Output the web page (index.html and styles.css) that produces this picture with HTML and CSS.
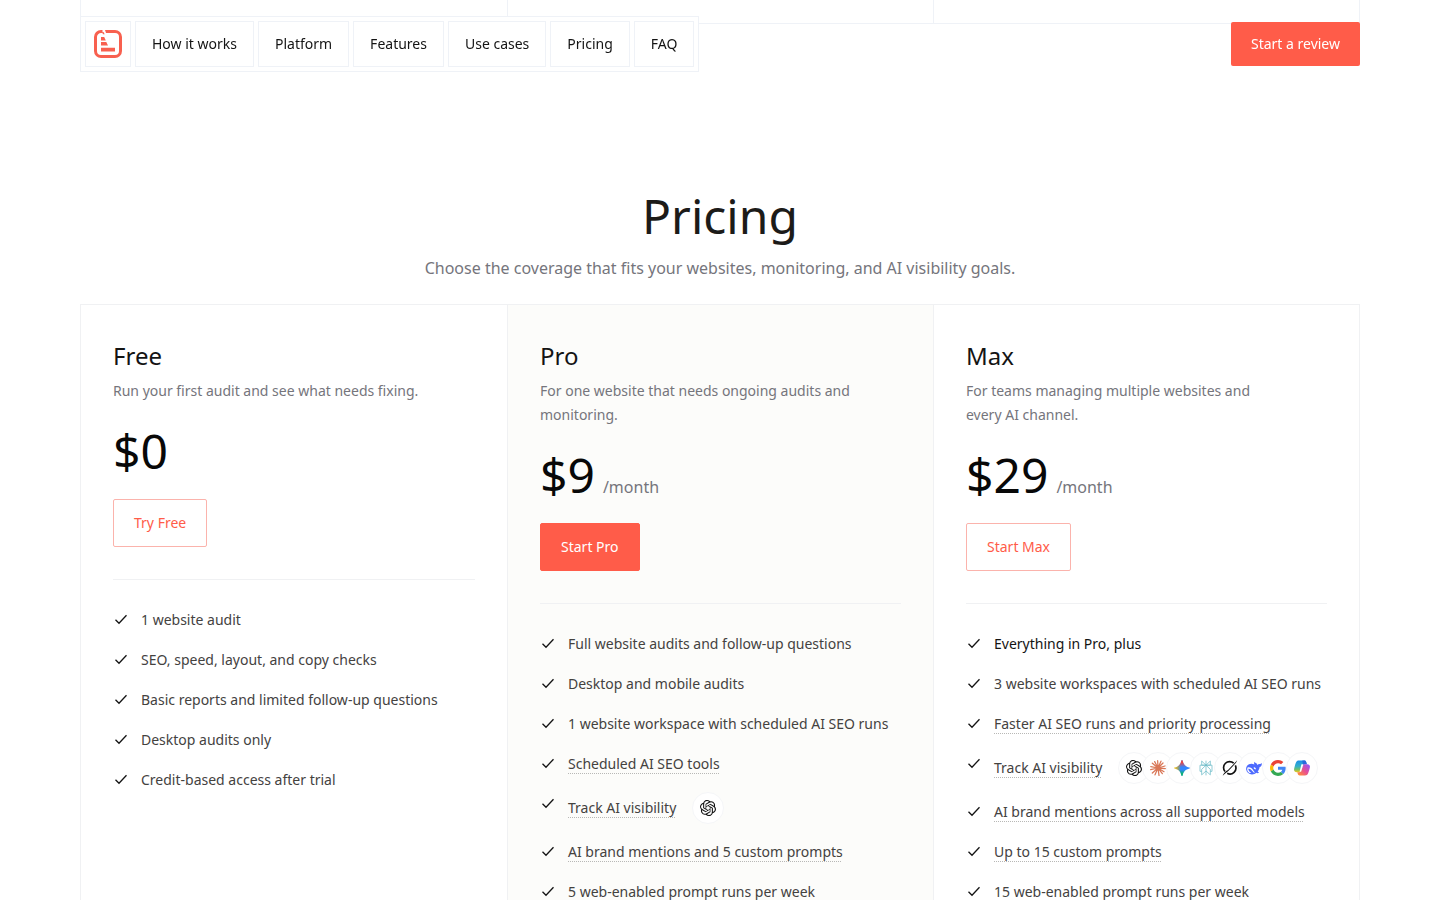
FILE: index.html
```html
<!DOCTYPE html>
<html lang="en">
<head>
<meta charset="utf-8">
<title>Pricing</title>
<meta name="viewport" content="width=device-width, initial-scale=1">
<link rel="stylesheet" href="styles.css">
</head>
<body>
<svg class="defs" aria-hidden="true">
  <defs>
    <linearGradient id="gem-a" x1="0" y1="0" x2="1" y2="0"><stop offset=".05" stop-color="#f6c21c"/><stop offset=".3" stop-color="#7f9a8a"/><stop offset=".42" stop-color="#3186ff"/></linearGradient>
    <linearGradient id="gem-b" x1="0" y1="0" x2="0" y2="1"><stop offset=".15" stop-color="#f0443c"/><stop offset=".45" stop-color="#f0443c" stop-opacity="0"/></linearGradient>
    <linearGradient id="gem-c" x1="0" y1="1" x2="0" y2="0"><stop offset=".12" stop-color="#08b962"/><stop offset=".4" stop-color="#08b962" stop-opacity="0"/></linearGradient>
    <linearGradient id="cop-a" x1="0" y1="0" x2="0" y2="1"><stop offset="0" stop-color="#1b8fe8"/><stop offset=".5" stop-color="#35b0c8"/><stop offset=".75" stop-color="#6cc070"/><stop offset="1" stop-color="#f5c518"/></linearGradient>
    <linearGradient id="cop-b" x1="1" y1="0" x2="0" y2="1"><stop offset=".1" stop-color="#9a55ee"/><stop offset=".5" stop-color="#e84f93"/><stop offset=".9" stop-color="#ff8a3c"/></linearGradient>
    <symbol id="check" viewBox="0 0 16 16"><path d="M2.500 7.700 6 11.200l7.500-8" fill="none" stroke="currentColor" stroke-width="1.300"/></symbol>
    <path id="spark" d="M12 0c.5 0 .7.4.8.8.8 3 1.700 5 3.500 6.900 1.900 1.800 3.900 2.700 6.900 3.500.4.1.8.3.8.8s-.4.7-.8.8c-3 .8-5 1.700-6.900 3.500-1.800 1.900-2.700 3.900-3.500 6.900-.1.4-.3.8-.8.8s-.7-.4-.8-.8c-.8-3-1.700-5-3.500-6.900-1.900-1.800-3.900-2.700-6.900-3.500C.4 12.700 0 12.500 0 12s.4-.7.8-.8c3-.8 5-1.700 6.900-3.500C9.500 5.800 10.400 3.800 11.200.8c.1-.4.3-.8.8-.8z"/>
    <symbol id="openai" viewBox="0 0 24 24"><path fill="#111" d="M22.2819 9.8211a5.9847 5.9847 0 0 0-.5157-4.9108 6.0462 6.0462 0 0 0-6.5098-2.9A6.0651 6.0651 0 0 0 4.9807 4.1818a5.9847 5.9847 0 0 0-3.9977 2.9 6.0462 6.0462 0 0 0 .7427 7.0966 5.98 5.98 0 0 0 .511 4.9107 6.051 6.051 0 0 0 6.5146 2.9001A5.9847 5.9847 0 0 0 13.2599 24a6.0557 6.0557 0 0 0 5.7718-4.2058 5.9894 5.9894 0 0 0 3.9977-2.9001 6.0557 6.0557 0 0 0-.7475-7.0729zm-9.022 12.6081a4.4755 4.4755 0 0 1-2.8764-1.0408l.1419-.0804 4.7783-2.7582a.7948.7948 0 0 0 .3927-.6813v-6.7369l2.02 1.1686a.071.071 0 0 1 .038.0520v5.5826a4.504 4.504 0 0 1-4.4945 4.4944zm-9.6607-4.1254a4.4708 4.4708 0 0 1-.5346-3.0137l.142.0852 4.783 2.7582a.7712.7712 0 0 0 .7806 0l5.8428-3.3685v2.3324a.0804.0804 0 0 1-.0332.0615L9.74 19.9502a4.4992 4.4992 0 0 1-6.1408-1.6464zM2.3408 7.8956a4.485 4.485 0 0 1 2.3655-1.9728V11.6a.7664.7664 0 0 0 .3879.6765l5.8144 3.3543-2.0201 1.1685a.0757.0757 0 0 1-.071 0l-4.8303-2.7865A4.504 4.504 0 0 1 2.3408 7.872zm16.5963 3.8558L13.1038 8.364 15.1192 7.2a.0757.0757 0 0 1 .071 0l4.8303 2.7913a4.4944 4.4944 0 0 1-.6765 8.1042v-5.6772a.79.79 0 0 0-.407-.667zm2.0107-3.0231l-.142-.0852-4.7735-2.7818a.7759.7759 0 0 0-.7854 0L9.409 9.2297V6.8974a.0662.0662 0 0 1 .0284-.0615l4.8303-2.7866a4.4992 4.4992 0 0 1 6.6802 4.66zM8.3065 12.863l-2.02-1.1638a.0804.0804 0 0 1-.038-.0567V6.0742a4.4992 4.4992 0 0 1 7.3757-3.4537l-.142.0805L8.704 5.459a.7948.7948 0 0 0-.3927.6813zm1.0976-2.3654l2.602-1.4998 2.6069 1.4998v2.9994l-2.5974 1.4997-2.6067-1.4997Z"/></symbol>
  </defs>
</svg>

<header class="header">
  <nav class="nav" aria-label="Main">
    <a class="nav-logo" href="#" aria-label="Home">
      <svg width="28" height="28" viewBox="0 0 28 28" fill="none" stroke="#f8604f">
        <path d="M8.500 1.500H7A5.500 5.500 0 0 0 1.500 7v14A5.500 5.500 0 0 0 7 26.500h14a5.500 5.500 0 0 0 5.500-5.500V7A5.500 5.500 0 0 0 21 1.500h-9" stroke-width="3"/>
        <path fill="#f8604f" stroke="none" d="M8 2h1.500l1.200 2.200H9zM11 0h2l1 3h-2zM7 7h3.200l1.600 3.500H7zM7 12h5.300l1.700 3.500H7zM7 17.800h14V21.500H7z"/>
      </svg>
    </a>
    <a class="nav-link" href="#how">How it works</a>
    <a class="nav-link" href="#platform">Platform</a>
    <a class="nav-link" href="#features">Features</a>
    <a class="nav-link" href="#cases">Use cases</a>
    <a class="nav-link" href="#pricing">Pricing</a>
    <a class="nav-link" href="#faq">FAQ</a>
  </nav>
  <button class="btn btn-solid btn-header" type="button">Start a review</button>
</header>

<main class="page">
  <div class="previous"><div></div><div></div><div></div></div>

  <section class="pricing" id="pricing">
    <h1 class="title">Pricing</h1>
    <p class="subtitle">Choose the coverage that fits your websites, monitoring, and AI visibility goals.</p>

    <div class="plans">
      <article class="plan">
        <h2 class="plan-name">Free</h2>
        <p class="plan-text">Run your first audit and see what needs fixing.</p>
        <p class="price">$0</p>
        <button class="btn btn-outline" type="button">Try Free</button>
        <ul class="features">
          <li><svg class="check"><use href="#check"/></svg><span>1 website audit</span></li>
          <li><svg class="check"><use href="#check"/></svg><span>SEO, speed, layout, and copy checks</span></li>
          <li><svg class="check"><use href="#check"/></svg><span>Basic reports and limited follow-up questions</span></li>
          <li><svg class="check"><use href="#check"/></svg><span>Desktop audits only</span></li>
          <li><svg class="check"><use href="#check"/></svg><span>Credit-based access after trial</span></li>
        </ul>
      </article>

      <article class="plan plan-featured">
        <h2 class="plan-name">Pro</h2>
        <p class="plan-text">For one website that needs ongoing audits and monitoring.</p>
        <p class="price">$9 <span class="period">/month</span></p>
        <button class="btn btn-solid" type="button">Start Pro</button>
        <ul class="features">
          <li><svg class="check"><use href="#check"/></svg><span>Full website audits and follow-up questions</span></li>
          <li><svg class="check"><use href="#check"/></svg><span>Desktop and mobile audits</span></li>
          <li><svg class="check"><use href="#check"/></svg><span>1 website workspace with scheduled AI SEO runs</span></li>
          <li><svg class="check"><use href="#check"/></svg><span class="hint">Scheduled AI SEO tools</span></li>
          <li><svg class="check"><use href="#check"/></svg>
            <div class="track"><span class="hint">Track AI visibility</span>
              <div class="models"><span class="model"><svg><use href="#openai"/></svg></span></div>
            </div>
          </li>
          <li><svg class="check"><use href="#check"/></svg><span class="hint">AI brand mentions and 5 custom prompts</span></li>
          <li><svg class="check"><use href="#check"/></svg><span>5 web-enabled prompt runs per week</span></li>
        </ul>
      </article>

      <article class="plan">
        <h2 class="plan-name">Max</h2>
        <p class="plan-text">For teams managing multiple websites and every AI channel.</p>
        <p class="price">$29 <span class="period">/month</span></p>
        <button class="btn btn-outline" type="button">Start Max</button>
        <ul class="features">
          <li class="strong"><svg class="check"><use href="#check"/></svg><span>Everything in Pro, plus</span></li>
          <li><svg class="check"><use href="#check"/></svg><span>3 website workspaces with scheduled AI SEO runs</span></li>
          <li><svg class="check"><use href="#check"/></svg><span class="hint">Faster AI SEO runs and priority processing</span></li>
          <li><svg class="check"><use href="#check"/></svg>
            <div class="track"><span class="hint">Track AI visibility</span>
              <div class="models">
                <span class="model"><svg><use href="#openai"/></svg></span>
                <span class="model"><svg viewBox="0 0 24 24" stroke="#d97757" stroke-width="1.900" stroke-linecap="round"><path d="M12 12 11.500 1M12 12 16.500 1.800M12 12l7.500-7.500M12 12l10.500-3M12 12l11 .8M12 12l9 5.500M12 12l6.500 8.500M12 12l1.500 11M12 12 7.500 22.300M12 12l-8.500 7.500M12 12 1 14.500M12 12 1.200 10M12 12 3.500 4.800M12 12 7 2.500"/></svg></span>
                <span class="model"><svg viewBox="0 0 24 24"><use href="#spark" fill="url(#gem-a)"/><use href="#spark" fill="url(#gem-b)"/><use href="#spark" fill="url(#gem-c)"/></svg></span>
                <span class="model"><svg viewBox="0 0 24 24" fill="none" stroke="#2a9db0" stroke-width="1.100" opacity=".7"><path d="M12 1v22M5.500 1.500 12 7.800l6.500-6.300v6.300h-13zM12 7.800 5.500 14v8.300l6.500-5.800 6.500 5.800V14zM5.500 17H3V7.800h18V17h-2.500"/></svg></span>
                <span class="model"><svg viewBox="0 0 24 24" fill="none" stroke="#111" stroke-width="2.500"><path d="M17.500 4.800A9 9 0 0 0 4.500 17.200M7.800 20A9 9 0 0 0 20 8.200"/><path fill="#111" stroke="none" d="M9 15 22.800 .5c-1 2.700-2.700 5-4.800 7L9.500 16.500C6.500 19 4 21 1 23.500c1.500-3.500 4-6.500 8-8.500z"/></svg></span>
                <span class="model"><svg viewBox="0 0 24 24"><path fill="#4d6bfe" fill-rule="evenodd" d="M23.700 4.500c-1 1.200-1.900 1.600-3.100 1.500-1.500-.1-2.700.4-3.600 1.400-.3-1.500-1-2.300-2.400-2.900-.9-.4-1.300-1-1.600-1.900-.9 1-1.200 2.600-.3 4.100C8.500 4.500 4 5.600 1.600 8.600.3 10.300-.1 12.400.3 14.600c.9 4.200 4.300 6.900 8.500 7 2.600.1 4.800-.8 6.600-2.300 1.300.6 3 .7 3.800 0 .2-.3.200-.9-.1-1.100-1-.6-1.400-.8-1.600-1 1.700-1.900 2.700-4 2.900-6.600 2.200-.9 3.600-2.400 3.300-6.100zM11.500 18.600c-2.300-2-3.600-4.900-6.900-5.500-1.100-.1-1.300.2-1 1.100.7 2.400 2.200 4.200 4.400 4.900-.8.500-1.900.6-2.700.4C2 17.800 1 14.400 2.300 11.100c3.700-.8 6.700 1 8.500 4.100.8 1.400 1.500 2.300 2.700 3-.6.400-1.300.5-2 .4zM11.600 11.300c1-.9 3 .5 3.200 2 .1.900-.7 1.100-1.400.7-.8-.6-2.100-1.700-1.800-2.700z"/></svg></span>
                <span class="model"><svg viewBox="0 0 48 48"><path fill="#ea4335" d="M24 9.500c3.540 0 6.710 1.220 9.210 3.600l6.850-6.850C35.900 2.380 30.470 0 24 0 14.620 0 6.510 5.380 2.560 13.220l7.980 6.190C12.430 13.720 17.740 9.500 24 9.500z"/><path fill="#4285f4" d="M46.980 24.550c0-1.570-.15-3.090-.38-4.550H24v9.020h12.940c-.58 2.960-2.260 5.480-4.780 7.180l7.730 6c4.510-4.180 7.090-10.360 7.090-17.650z"/><path fill="#fbbc05" d="M10.530 28.590c-.48-1.450-.76-2.990-.76-4.590s.27-3.140.76-4.590l-7.980-6.190C.92 16.460 0 20.120 0 24c0 3.880.92 7.540 2.560 10.780l7.970-6.190z"/><path fill="#34a853" d="M24 48c6.480 0 11.930-2.130 15.890-5.810l-7.730-6c-2.150 1.450-4.920 2.300-8.160 2.300-6.260 0-11.570-4.220-13.470-9.910l-7.980 6.190C6.510 42.620 14.620 48 24 48z"/></svg></span>
                <span class="model"><svg viewBox="0 0 24 24"><path fill="url(#cop-a)" d="M7.500.8h8c1.600 0 2.400.9 2.900 2.600l.8 2.800h-2.500c-1.300 0-2.100.7-2.600 2.200l-2.400 7.400c-.6 1.700-1.600 2.600-3.200 2.600H4C1.300 18.400-.2 16.600.1 14c.3-2.500 1.300-6.300 2.700-10C3.700 1.600 5.200.8 7.500.8z"/><path fill="#2a67dd" d="M12.500.8h3c1.600 0 2.400.9 2.900 2.600l.8 2.800h-2.500c-1.300 0-2.100.7-2.600 2.200l-.5 1.600z"/><path fill="url(#cop-b)" d="M16.500 23.200h-8c-1.600 0-2.400-.9-2.900-2.600l-.7-2.200h2.900c1.600 0 2.600-.9 3.200-2.600l2.500-7.600c.5-1.400 1.300-2 2.600-2H20c2.700 0 4.200 1.800 3.900 4.400-.3 2.500-1.300 5.700-2.700 9.400-.9 2.400-2.400 3.200-4.700 3.200z"/><path fill="#fff" d="M11.200 6.200h3l-3.600 11.600H8.400z"/></svg></span>
              </div>
            </div>
          </li>
          <li><svg class="check"><use href="#check"/></svg><span class="hint">AI brand mentions across all supported models</span></li>
          <li><svg class="check"><use href="#check"/></svg><span class="hint">Up to 15 custom prompts</span></li>
          <li><svg class="check"><use href="#check"/></svg><span>15 web-enabled prompt runs per week</span></li>
        </ul>
      </article>
    </div>
  </section>
</main>
</body>
</html>
```
FILE: styles.css
```css
* { box-sizing: border-box; }

:root {
  --line: #f0f1f3;
  --line-cool: #eff2f7;
  --accent: #ff5c49;
  --ink: #141414;
  --body: #44423f;
  --muted: #75757c;
}

body {
  margin: 0;
  background: #fff;
  color: var(--ink);
  font-family: "Noto Sans", sans-serif;
  font-size: 14px;
  line-height: 24px;
}

h1, h2, p, ul { margin: 0; padding: 0; font-weight: 400; }

a { color: inherit; text-decoration: none; }

.defs { position: absolute; width: 0; height: 0; }

.header {
  position: fixed;
  top: 16px;
  left: 80px;
  right: 80px;
  z-index: 1;
  display: flex;
  align-items: center;
  justify-content: space-between;
}

.nav {
  display: flex;
  gap: 4px;
  padding: 4px;
  border: 1px solid var(--line-cool);
  background: #fff;
}

.nav-logo, .nav-link {
  display: flex;
  align-items: center;
  justify-content: center;
  height: 46px;
  border: 1px solid var(--line-cool);
}

.nav-logo { width: 46px; }
.nav-link { padding: 0 16px; }

.btn {
  display: inline-block;
  height: 48px;
  padding: 0 20px;
  border: 1px solid var(--accent);
  border-radius: 2px;
  font: inherit;
  cursor: pointer;
}

.btn-solid { background: var(--accent); color: #fff; }
.btn-outline { background: #fff; border-color: #fbb3ac; color: var(--accent); }
.btn-header { height: 44px; border: 0; }

.page { padding: 0 80px; }

.previous {
  display: grid;
  grid-template-columns: repeat(3, 1fr);
  height: 24px;
  border: 1px solid var(--line-cool);
  border-top: 0;
}

.previous div + div { border-left: 1px solid var(--line-cool); }

.pricing { padding-top: 168px; }

.title {
  font-size: 48px;
  line-height: 48px;
  text-align: center;
  color: #1c1b19;
}

.subtitle {
  margin: 16px 0 24px;
  font-size: 16px;
  text-align: center;
  color: var(--muted);
}

.plans {
  display: grid;
  grid-template-columns: repeat(3, 1fr);
  border: 1px solid var(--line);
}

.plan { padding: 32px; }
.plan + .plan { border-left: 1px solid var(--line); }
.plan-featured { background: #fcfcfa; }

.plan-name { margin-bottom: 4px; font-size: 24px; line-height: 38px; }
.plan-text { max-width: 320px; color: var(--muted); }

.price {
  display: flex;
  align-items: baseline;
  gap: 8px;
  margin: 24px 0;
  font-size: 48px;
  line-height: 48px;
  color: #080808;
}

.period { font-size: 16px; line-height: 24px; color: var(--muted); }

.features {
  display: flex;
  flex-direction: column;
  gap: 16px;
  margin-top: 32px;
  padding-top: 28px;
  border-top: 1px solid var(--line);
  list-style: none;
  color: var(--body);
}

.features li { display: flex; gap: 12px; }
.features .strong { color: var(--ink); }

.check {
  flex: none;
  width: 16px;
  height: 16px;
  margin-top: 4px;
  color: var(--ink);
}

.hint {
  text-decoration: underline dotted #b8b8b6 1px;
  text-decoration-skip-ink: none;
  text-underline-offset: 4px;
}

.track { display: flex; align-items: center; gap: 16px; }

.models { display: flex; }

.model {
  display: flex;
  align-items: center;
  justify-content: center;
  width: 32px;
  height: 32px;
  border: 1px solid #f5f6f8;
  border-radius: 50%;
  background: #fff;
}

.model + .model { margin-left: -8px; }
.model svg { width: 16px; height: 16px; }
```
